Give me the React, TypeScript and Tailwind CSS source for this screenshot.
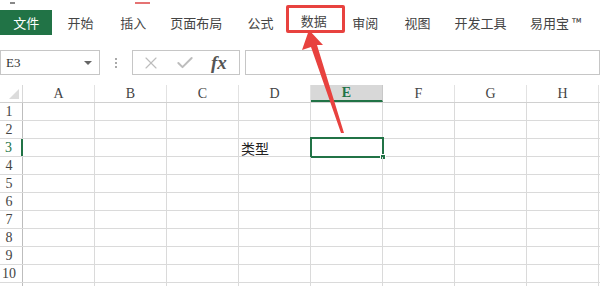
import { X, Check } from 'lucide-react'

const tabs = [
  { label: '开始', w: 'w-[57px]' },
  { label: '插入', w: 'w-[50px]' },
  { label: '页面布局', w: 'w-[78px]' },
  { label: '公式', w: 'w-[52px]' },
]
const tabsAfter = [
  { label: '审阅', w: 'w-[40px]' },
  { label: '视图', w: 'w-[66px]' },
  { label: '开发工具', w: 'w-[62px]' },
  { label: '易用宝 ™', w: 'w-[90px]' },
]
const cols = ['A', 'B', 'C', 'D', 'E', 'F', 'G', 'H', '']
const rows = [1, 2, 3, 4, 5, 6, 7, 8, 9, 10, 0]

const cjk = { fontFamily: '"Noto Sans CJK SC", "Noto Sans", sans-serif' }
const grid = { fontFamily: '"Liberation Serif", "Noto Sans CJK SC", serif' }

function Ribbon() {
  return (
    <div className="h-[50px] relative shrink-0 bg-white text-[13px] text-[#444]" style={cjk}>
      <div className="absolute left-[135px] top-[2px] w-[15px] h-[2px] bg-[#e57373]" />
      <div className="absolute left-[10px] top-[2px] w-[5px] h-[2px] bg-[#888]" />
      <div className="flex items-start pt-[10px]">
        <div className="w-[53px] h-[25px] bg-[#217346] text-white flex items-center justify-center">文件</div>
        {tabs.map((t) => (
          <div key={t.label} className={`${t.w} h-[25px] flex items-center justify-center`}>
            {t.label}
          </div>
        ))}
        <div className="w-[60px] h-[28px] -mt-[5px] border-[3px] border-[#e8423f] rounded-[2px] flex items-center justify-center pt-[3px] pr-[4px]">
          数据
        </div>
        {tabsAfter.map((t) => (
          <div key={t.label} className={`${t.w} h-[25px] flex items-center justify-center`}>
            {t.label}
          </div>
        ))}
      </div>
    </div>
  )
}

function FormulaBar() {
  return (
    <div className="h-[35px] flex items-start shrink-0 bg-white">
      <div className="w-[100px] h-[25px] border border-[#c6c6c6] flex items-center justify-between pl-[5px] pr-[7px]">
        <span className="text-[13px] text-[#333]" style={grid}>E3</span>
        <span className="w-0 h-0 border-l-[4px] border-r-[4px] border-t-[4px] border-l-transparent border-r-transparent border-t-[#666]" />
      </div>
      <div className="w-[32px] h-[25px] flex flex-col items-center justify-center gap-[2px]">
        <span className="w-[2px] h-[2px] bg-[#aaa]" />
        <span className="w-[2px] h-[2px] bg-[#aaa]" />
        <span className="w-[2px] h-[2px] bg-[#aaa]" />
      </div>
      <div className="w-[108px] h-[25px] border border-[#c6c6c6] flex items-center pl-[8px]">
        <X size={20} strokeWidth={1.4} className="text-[#bdbdbd]" />
        <Check size={20} strokeWidth={2.4} className="text-[#bdbdbd] ml-[14px]" />
        <span className="ml-[16px] text-[19px] italic font-bold text-[#555] leading-none" style={grid}>fx</span>
      </div>
      <div className="ml-[5px] flex-1 h-[25px] border border-[#c6c6c6]" />
    </div>
  )
}

function Sheet() {
  return (
    <div className="flex flex-col bg-white text-[14px] text-[#444]" style={grid}>
      <div className="flex h-[18px] border-b border-[#d0d0d0]">
        <div className="w-[23px] shrink-0 border-r border-[#d8d8d8] relative">
          <svg className="absolute right-[3px] bottom-[3px]" width="10" height="10">
            <polygon points="10,0 10,10 0,10" fill="#dcdcdc" />
          </svg>
        </div>
        {cols.map((c, i) =>
          c === 'E' ? (
            <div key={i} className="w-[72px] shrink-0 bg-[#d8d8d8] border-b-2 border-[#217346] text-[#217346] font-bold flex items-center justify-center border-r border-r-[#c8c8c8]">
              {c}
            </div>
          ) : (
            <div key={i} className="w-[72px] shrink-0 border-r border-[#e2e2e2] flex items-center justify-center">
              {c}
            </div>
          ),
        )}
      </div>
      {rows.map((r, ri) => (
        <div key={ri} className="flex h-[18px] border-b border-[#dadada] shrink-0">
          <div
            className={`w-[23px] shrink-0 flex items-center justify-center pr-[4px] ${
              r === 3 ? 'text-[#217346] border-r-2 border-[#217346]' : 'border-r border-[#bdbdbd]'
            }`}
          >
            {r > 0 ? r : ''}
          </div>
          {cols.map((c, ci) => (
            <div key={ci} className="w-[72px] shrink-0 border-r border-[#dadada] relative">
              {r === 3 && c === 'D' && (
                <span className="absolute left-[2px] -top-[1px] text-[14px] text-[#222]" style={cjk}>类型</span>
              )}
              {r === 3 && c === 'E' && (
                <div className="absolute -left-[1px] -top-[2px] w-[74px] h-[21px] border-2 border-[#217346]">
                  <div className="absolute -right-[4px] -bottom-[4px] w-[6px] h-[6px] bg-[#217346] border border-white" />
                </div>
              )}
            </div>
          ))}
        </div>
      ))}
    </div>
  )
}

export default function App() {
  return (
    <div className="w-[600px] h-[286px] overflow-hidden bg-white relative flex flex-col">
      <Ribbon />
      <FormulaBar />
      <Sheet />
      <svg className="absolute left-0 top-0 pointer-events-none" width="600" height="286">
        <polygon points="309,30 302,50 311,47 341,133 344,133 317,45 323,45" fill="#e8423f" />
      </svg>
    </div>
  )
}
